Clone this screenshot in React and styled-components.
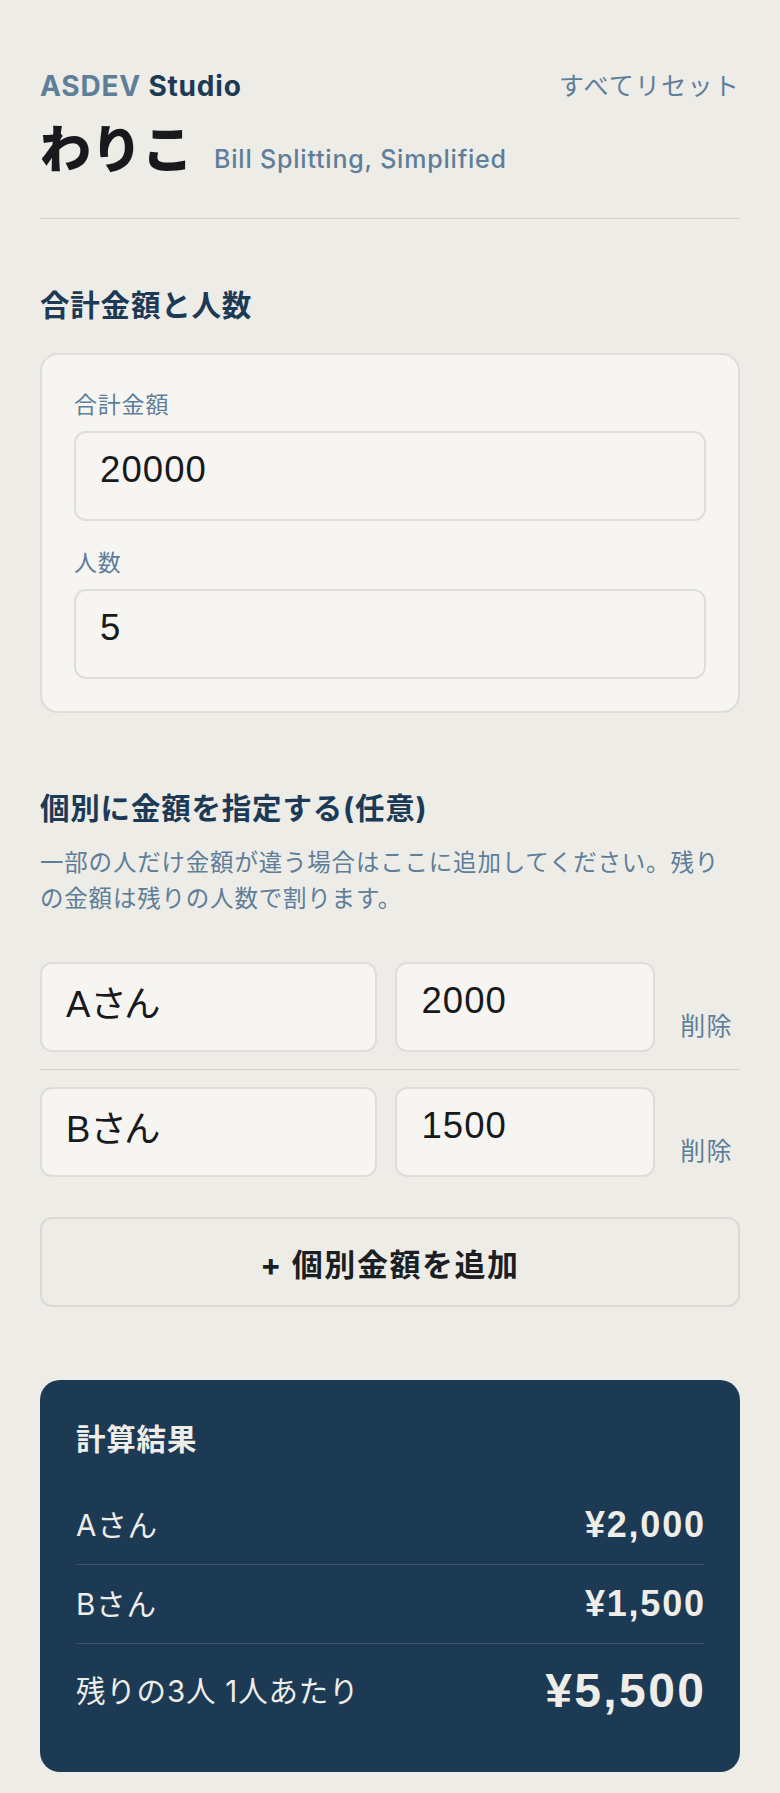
import React, { useState } from "react";
import styled, { createGlobalStyle } from "styled-components";

const GlobalStyle = createGlobalStyle`
  html, body {
    margin: 0;
    padding: 0;
    background: #edece7;
  }
  body {
    font-family: Inter, "Noto Sans CJK JP", sans-serif;
    color: #17191d;
    letter-spacing: 0.05em;
    -webkit-font-smoothing: antialiased;
  }
  *, *::before, *::after {
    box-sizing: border-box;
  }
`;

const Page = styled.main`
  width: 700px;
  margin: 0 auto;
  padding: 66px 0 48px;
  display: flex;
  flex-direction: column;
`;

/* ---------- header ---------- */

const Header = styled.header`
  padding-bottom: 38px;
  border-bottom: 1px solid #d3d1cc;
`;

const TopRow = styled.div`
  display: flex;
  justify-content: space-between;
  align-items: center;
  height: 40px;
`;

const Brand = styled.div`
  font-size: 28px;
  font-weight: 700;
  line-height: 40px;
  color: #1c3a55;
`;

const BrandAccent = styled.span`
  color: #5e7e99;
`;

const TextButton = styled.button`
  background: none;
  border: none;
  padding: 0;
  cursor: pointer;
  font-family: inherit;
  font-size: 25px;
  letter-spacing: 0.05em;
  line-height: 40px;
  color: #5e7e99;
`;

const TitleRow = styled.div`
  display: flex;
  align-items: baseline;
  gap: 21px;
  margin-top: 14px;
`;

const AppTitle = styled.h1`
  margin: 0;
  font-size: 51px;
  font-weight: 900;
  line-height: 60px;
  letter-spacing: 0;
  color: #17191d;
`;

const Tagline = styled.span`
  font-size: 25px;
  font-weight: 500;
  color: #5e7e99;
`;

/* ---------- sections ---------- */

const Section = styled.section`
  margin-top: ${(p) => p.$top}px;
`;

const SectionTitle = styled.h2`
  margin: 0;
  font-size: 29.5px;
  font-weight: 700;
  line-height: 42px;
  color: #1c3a55;
`;

const Card = styled.div`
  margin-top: 27px;
  padding: 32px;
  background: #f6f5f1;
  border: 2px solid #dfddd8;
  border-radius: 18px;
  display: flex;
  flex-direction: column;
  gap: 24px;
`;

const Field = styled.label`
  display: flex;
  flex-direction: column;
  gap: 8px;
`;

const FieldLabel = styled.span`
  font-size: 23px;
  line-height: 36px;
  color: #5e7e99;
`;

const Input = styled.input`
  width: 100%;
  min-width: 0;
  height: 90px;
  padding: 0 24px 12px;
  background: #f6f5f1;
  border: 2px solid #dfddd8;
  border-radius: 12px;
  font-family: "Liberation Sans", "Noto Sans CJK JP", sans-serif;
  font-feature-settings: "palt";
  font-size: 36.5px;
  letter-spacing: 0.03em;
  color: #17191d;
  outline: none;
`;

const Description = styled.p`
  margin: 16px 0 0;
  font-size: 23.5px;
  line-height: 35.5px;
  color: #5e7e99;
`;

const EntryList = styled.div`
  margin-top: 46px;
  display: flex;
  flex-direction: column;
`;

const EntryRow = styled.div`
  display: grid;
  grid-template-columns: 1.3fr 1fr 67px;
  column-gap: 18px;
  align-items: end;
  padding: 17px 0;
  border-bottom: 1px solid #d3d1cc;

  &:first-child {
    padding-top: 0;
  }
  &:last-child {
    padding-bottom: 0;
    border-bottom: none;
  }
`;

const DeleteButton = styled(TextButton)`
  line-height: 36px;
  padding-bottom: 8px;
  text-align: center;
`;

const AddButton = styled.button`
  margin-top: 40px;
  width: 100%;
  height: 90px;
  background: transparent;
  border: 2px solid #dbd9d4;
  border-radius: 12px;
  font-family: inherit;
  font-size: 31px;
  font-weight: 700;
  letter-spacing: 0.05em;
  color: #1b1e22;
  cursor: pointer;
`;

/* ---------- result ---------- */

const ResultCard = styled.section`
  margin-top: 73px;
  padding: 36px 36px 34px;
  background: #1d3a55;
  border-radius: 20px;
  color: #eeede8;
`;

const ResultTitle = styled.h2`
  margin: 0 0 24px;
  font-size: 29.5px;
  font-weight: 700;
  line-height: 46px;
`;

const ResultRow = styled.div`
  display: flex;
  justify-content: space-between;
  align-items: center;
  padding: 18px 0;
  border-bottom: 1px solid rgba(255, 255, 255, 0.14);

  &:last-child {
    border-bottom: none;
  }
`;

const ResultLabel = styled.span`
  font-size: 29.5px;
  line-height: 42px;
`;

const Amount = styled.span`
  font-family: "Liberation Sans", sans-serif;
  font-weight: 700;
  font-size: ${(p) => (p.$large ? 48 : 36)}px;
  line-height: ${(p) => (p.$large ? 58 : 42)}px;
  letter-spacing: 0.05em;
  margin-right: -0.05em;
`;

const yen = (n) => "¥" + Math.round(n).toLocaleString("ja-JP");

export default function App() {
  const [total, setTotal] = useState("20000");
  const [people, setPeople] = useState("5");
  const [entries, setEntries] = useState([
    { id: 1, name: "Aさん", amount: "2000" },
    { id: 2, name: "Bさん", amount: "1500" },
  ]);

  const update = (id, key, value) =>
    setEntries((list) => list.map((e) => (e.id === id ? { ...e, [key]: value } : e)));

  const remove = (id) => setEntries((list) => list.filter((e) => e.id !== id));

  const add = () =>
    setEntries((list) => [
      ...list,
      { id: Date.now(), name: "", amount: "" },
    ]);

  const reset = () => {
    setTotal("");
    setPeople("");
    setEntries([]);
  };

  const fixedSum = entries.reduce((s, e) => s + (Number(e.amount) || 0), 0);
  const restCount = (Number(people) || 0) - entries.length;
  const perPerson = restCount > 0 ? ((Number(total) || 0) - fixedSum) / restCount : 0;

  return (
    <>
      <GlobalStyle />
      <Page>
        <Header>
          <TopRow>
            <Brand>
              <BrandAccent>ASDEV</BrandAccent> Studio
            </Brand>
            <TextButton type="button" onClick={reset}>
              すべてリセット
            </TextButton>
          </TopRow>
          <TitleRow>
            <AppTitle>わりこ</AppTitle>
            <Tagline>Bill Splitting, Simplified</Tagline>
          </TitleRow>
        </Header>

        <Section $top={65}>
          <SectionTitle>合計金額と人数</SectionTitle>
          <Card>
            <Field>
              <FieldLabel>合計金額</FieldLabel>
              <Input
                inputMode="numeric"
                value={total}
                onChange={(e) => setTotal(e.target.value)}
              />
            </Field>
            <Field>
              <FieldLabel>人数</FieldLabel>
              <Input
                inputMode="numeric"
                value={people}
                onChange={(e) => setPeople(e.target.value)}
              />
            </Field>
          </Card>
        </Section>

        <Section $top={74}>
          <SectionTitle>個別に金額を指定する(任意)</SectionTitle>
          <Description>
            一部の人だけ金額が違う場合はここに追加してください。残りの金額は残りの人数で割ります。
          </Description>
          <EntryList>
            {entries.map((e) => (
              <EntryRow key={e.id}>
                <Input
                  value={e.name}
                  placeholder="名前"
                  onChange={(ev) => update(e.id, "name", ev.target.value)}
                />
                <Input
                  inputMode="numeric"
                  value={e.amount}
                  placeholder="金額"
                  onChange={(ev) => update(e.id, "amount", ev.target.value)}
                />
                <DeleteButton type="button" onClick={() => remove(e.id)}>
                  削除
                </DeleteButton>
              </EntryRow>
            ))}
          </EntryList>
          <AddButton type="button" onClick={add}>
            + 個別金額を追加
          </AddButton>
        </Section>

        <ResultCard>
          <ResultTitle>計算結果</ResultTitle>
          {entries.map((e) => (
            <ResultRow key={e.id}>
              <ResultLabel>{e.name}</ResultLabel>
              <Amount>{yen(Number(e.amount) || 0)}</Amount>
            </ResultRow>
          ))}
          <ResultRow>
            <ResultLabel>残りの{restCount}人 1人あたり</ResultLabel>
            <Amount $large>{yen(perPerson)}</Amount>
          </ResultRow>
        </ResultCard>
      </Page>
    </>
  );
}
